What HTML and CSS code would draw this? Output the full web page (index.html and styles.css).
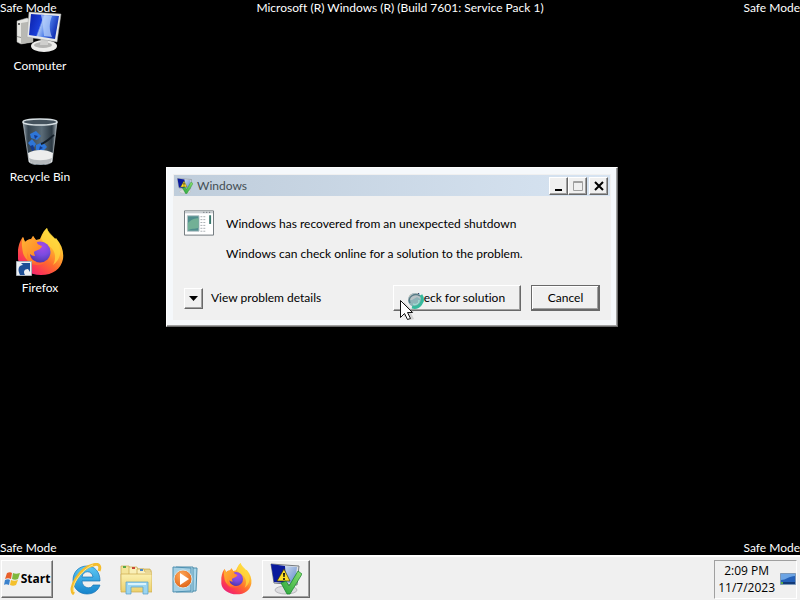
FILE: index.html
```html
<!DOCTYPE html>
<html lang="en">
<head>
<meta charset="utf-8">
<title>Safe Mode desktop</title>
<link rel="stylesheet" href="styles.css">
</head>
<body>
<svg class="defs" aria-hidden="true">
  <defs>
    <linearGradient id="foxBody" x1="0.85" y1="0.05" x2="0.2" y2="0.95">
      <stop offset="0" stop-color="#fff44f"/><stop offset="0.3" stop-color="#ffb82e"/>
      <stop offset="0.6" stop-color="#ff6a2e"/><stop offset="0.85" stop-color="#fb3556"/><stop offset="1" stop-color="#e8257a"/>
    </linearGradient>
    <radialGradient id="foxGlobe" cx="0.6" cy="0.25" r="0.8">
      <stop offset="0" stop-color="#a64be8"/><stop offset="0.5" stop-color="#7a4be0"/><stop offset="1" stop-color="#4a34a8"/>
    </radialGradient>
    <linearGradient id="foxHead" x1="0" y1="0" x2="1" y2="1">
      <stop offset="0" stop-color="#ffb536"/><stop offset="1" stop-color="#ff7a22"/>
    </linearGradient>
    <linearGradient id="screen" x1="0" y1="0" x2="1" y2="0.3">
      <stop offset="0" stop-color="#0a1fa8"/><stop offset="0.45" stop-color="#1a3fd8"/>
      <stop offset="0.5" stop-color="#9fbdf5"/><stop offset="0.7" stop-color="#4a7ae8"/><stop offset="1" stop-color="#1636b8"/>
    </linearGradient>
    <linearGradient id="paleScreen" x1="0" y1="0" x2="1" y2="1">
      <stop offset="0" stop-color="#cfdcf0"/><stop offset="1" stop-color="#5f88cc"/>
    </linearGradient>
    <linearGradient id="glass" x1="0" y1="0" x2="1" y2="0">
      <stop offset="0" stop-color="#8d9aa3"/><stop offset="0.15" stop-color="#34434f"/>
      <stop offset="0.55" stop-color="#5b6c78"/><stop offset="0.85" stop-color="#2c3943"/><stop offset="1" stop-color="#a4afb6"/>
    </linearGradient>
    <linearGradient id="ieBlue" x1="0" y1="0" x2="0" y2="1">
      <stop offset="0" stop-color="#5cc8f4"/><stop offset="1" stop-color="#1684cc"/>
    </linearGradient>
    <linearGradient id="folder" x1="0" y1="0" x2="0" y2="1">
      <stop offset="0" stop-color="#fbf0b0"/><stop offset="1" stop-color="#ecd06c"/>
    </linearGradient>
    <radialGradient id="orange" cx="0.4" cy="0.3" r="0.8">
      <stop offset="0" stop-color="#ffa95a"/><stop offset="1" stop-color="#dc5c10"/>
    </radialGradient>
    <linearGradient id="tick" x1="1" y1="0" x2="0" y2="1">
      <stop offset="0" stop-color="#8be070"/><stop offset="1" stop-color="#28a43c"/>
    </linearGradient>
    <symbol id="firefox" viewBox="0 0 48 48">
      <path fill="url(#foxBody)" d="M2 22C3 15 5 11 7 9l2 5c2-2 4-3 6-3l2-3 3 4 4-1C26 7 27 3 31 0c1 5 4 7 8 11l1-1c6 7 8 14 7 21-2 10-10 16-22 16S3 40 2 31z"/>
      <path fill="#ffd83d" d="M31 0c1 6 12 10 13 22 1 7-3 12-7 15 4-8 2-15-4-19-6-3-8-8-8-8 2-3 3-7 6-10z" opacity=".75"/>
      <circle cx="24" cy="24" r="10.500" fill="url(#foxGlobe)"/>
      <path fill="url(#foxHead)" d="M7 9l2 5c2-2 5-3 7-2l1-4 4 6c0 3 3 3 5 4-1 4-6 4-8 6 0 2 1 3 1 4-2 0-4-1-5-2 0 4 2 7 7 8-6 2-12-2-14-9C6 19 5 14 7 9z"/>
      <path fill="#ff7a2a" d="M11 24c2 8 9 13 18 10-3 4-14 4-18-1z" opacity=".6"/>
    </symbol>
    <symbol id="recover" viewBox="0 0 32 32">
      <ellipse cx="16" cy="27" rx="11" ry="4" fill="#dddde0" stroke="#b8b8bc"/>
      <path fill="#dfe2e4" stroke="#777b80" d="M1 1l28 2-2 19L4 20z"/>
      <path fill="url(#paleScreen)" d="M14 3l13 1-2 17-11-2z"/>
      <path fill="#0a1a9c" d="M1 1l14 2 1 17-12-1z"/>
      <path fill="#ffe02a" stroke="#39340a" stroke-width=".7" d="M14 6L7 18h13z"/>
      <path fill="#111" d="M13 10h2l-.4 4h-1.200zM13.200 15h1.600v2h-1.600z"/>
      <path fill="url(#tick)" stroke="#13812a" stroke-width=".7" d="M11 20l5-2 3 5 9-15 4 3-12 20h-3z"/>
    </symbol>
  </defs>
</svg>

<main class="desktop">
  <span class="mark mark-tl">Safe Mode</span>
  <span class="mark mark-tc">Microsoft (R) Windows (R) (Build 7601: Service Pack 1)</span>
  <span class="mark mark-tr">Safe Mode</span>
  <span class="mark mark-bl">Safe Mode</span>
  <span class="mark mark-br">Safe Mode</span>

  <nav class="shortcuts" aria-label="Desktop">
    <a class="shortcut" href="#computer">
      <svg viewBox="0 0 48 48" aria-hidden="true">
        <path fill="#e6e6e2" stroke="#aaa" stroke-width=".5" d="M1 15l10-3 6 3v21L5 38l-4-2z"/>
        <path fill="#b9b9b4" d="M5 17l12-2v21L5 38z"/>
        <circle cx="3" cy="18" r="1" fill="#333"/>
        <path fill="#8c8c88" d="M1 30l4 1v1l-4-1z"/>
        <ellipse cx="28" cy="40" rx="13" ry="6" fill="#ededeb"/>
        <ellipse cx="27" cy="39" rx="9" ry="3" fill="#b4b4b2"/>
        <path fill="#cfcfcd" d="M25 31h7v8h-8z"/>
        <path fill="#e8e9e8" stroke="#a0a2a3" stroke-width=".5" d="M13 6l32 2-4 28-30-5z"/>
        <path fill="url(#screen)" d="M15 8l28 2-4 23-26-4z"/>
        <path fill="#b7d0fb" opacity=".75" d="M25 9l11 1c-3 7-3 14 0 21l-8-1c-1-7-1-14-3-21z"/>
      </svg>
      <span>Computer</span>
    </a>
    <a class="shortcut" href="#recycle-bin">
      <svg viewBox="0 0 48 48" aria-hidden="true">
        <path fill="url(#glass)" stroke="#b8c2c8" stroke-width=".7" d="M7 5h34l-5 40c-5 4-19 4-23 0z"/>
        <path fill="#2e76d8" d="M14 17l6-3 5 5-4 4-6-2zM12 26l4-4 4 5-3 5zM20 28l7-3 4 5-5 5-6-2z"/>
        <path fill="#14398c" d="M18 18l4 1-3 3zM14 29l3-1 2 5-3 1zM24 29l3 2-4 2z"/>
        <path fill="none" stroke="#151f29" stroke-width="2" d="M25 27c6-2 9-6 13-9"/>
        <path fill="#eceded" d="M12 36c7-4 18-4 25 0l-1 9c-5 3-18 3-23 0z"/>
        <path fill="#b4b8bb" d="M13 41c6 3 16 3 23 0l-1 4c-5 3-16 3-21 0z"/>
        <ellipse cx="24" cy="5" rx="17" ry="3" fill="#44525d" stroke="#d8e0e4" stroke-width="1.500"/>
      </svg>
      <span>Recycle Bin</span>
    </a>
    <a class="shortcut" href="#firefox">
      <svg viewBox="0 0 48 48" aria-hidden="true">
        <use href="#firefox"/>
        <path fill="#eef1f4" stroke="#a9b0b8" d="M.5 33.500h15v14H.5z"/>
        <path fill="#1e4f96" d="M4 47c-3-6-1-10 3-10l-2-2h9v9l-2-3c-4 0-5 3-3 6z"/>
      </svg>
      <span>Firefox</span>
    </a>
  </nav>

  <section class="dialog" role="dialog" aria-labelledby="dialog-title">
    <header class="titlebar">
      <svg class="title-icon" aria-hidden="true"><use href="#recover"/></svg>
      <h1 id="dialog-title">Windows</h1>
      <div class="window-buttons">
        <button class="raised" aria-label="Minimize"><svg viewBox="0 0 12 12"><path fill="#000" d="M2 9h7v2H2z"/></svg></button>
        <button class="raised" aria-label="Maximize" disabled><svg viewBox="0 0 12 12"><path fill="none" stroke="#a0a0a0" d="M1.500 1.500h9v9h-9zM1 2.500h10"/></svg></button>
        <button class="raised close" aria-label="Close"><svg viewBox="0 0 12 12"><path fill="none" stroke="#000" stroke-width="2" d="M2 2l8 8M10 2l-8 8"/></svg></button>
      </div>
    </header>
    <div class="message">
      <svg class="app-icon" viewBox="0 0 31 26" aria-hidden="true">
        <path fill="#fff" stroke="#6f777b" d="M.5.500h30v25H.5z"/>
        <path fill="#c9ced2" d="M1 1h29v2H1z"/>
        <path stroke="#596066" stroke-dasharray="1 2" d="M20 2h9"/>
        <path fill="#4f8d8d" stroke="#b6c4c8" d="M3.500 5.500h12v16h-12z"/>
        <path fill="#72b096" d="M4 13c4-4 7-5 11-5v10c-4 2-8 0-11 3z"/>
        <path stroke="#a9aeb2" stroke-dasharray="2 1" d="M17 6.500h6M17 9.500h6M17 12.500h6M17 15.500h6M17 18.500h6M17 21.500h6"/>
        <path fill="#39786e" d="M26 5h2v9h-2z"/>
      </svg>
      <div>
        <p>Windows has recovered from an unexpected shutdown</p>
        <p>Windows can check online for a solution to the problem.</p>
      </div>
    </div>
    <footer class="actions">
      <button class="raised expand" id="details" aria-label="View problem details"><svg viewBox="0 0 9 5"><path d="M0 0h9L4.500 5z"/></svg></button>
      <label for="details">View problem details</label>
      <div class="commands">
        <button class="raised check">Check for solution</button>
        <button class="raised cancel">Cancel</button>
      </div>
    </footer>
  </section>

  <svg class="pointer" viewBox="0 0 32 32" aria-hidden="true">
    <circle cx="15" cy="12" r="7" fill="#8fb4b8"/>
    <path fill="#b9c2c6" d="M8 12a7 7 0 0 1 14 0l-5-3-5 3z"/>
    <path fill="none" stroke="#35b99c" stroke-width="3" d="M21 7a8 8 0 0 1-9 12"/>
    <path fill="none" stroke="#587c86" stroke-width="1.500" d="M10 15c-3-6 5-11 10-7"/>
    <path fill="none" stroke="#a4efdc" d="M19 12c0 4-3 5-6 4"/>
    <path fill="#999" opacity=".35" d="M4 14l10 10-3 1 3 6-4 1-3-6-3 3z"/>
    <path fill="#fff" stroke="#111" d="M.5 12.500v17l4-4 3 6 3-1-3-6h5z"/>
  </svg>
</main>

<footer class="taskbar">
  <button class="raised start">
    <svg viewBox="0 0 16 16" aria-hidden="true">
      <path fill="#e8602c" d="M3 2c2-1 4-1 5 0L7 8C5 7 3 7 1 8z"/>
      <path fill="#7fb83c" d="M9 2c2 1 4 1 7 0l-2 6c-2 1-4 1-6 0z"/>
      <path fill="#3c82cc" d="M1 9c2-1 4-1 5 0l-1 5c-2-1-4-1-5 0z"/>
      <path fill="#f4c02c" d="M7 9c2 1 4 1 7 0l-2 5c-2 1-4 1-6 0z"/>
    </svg>
    Start
  </button>
  <nav class="pinned" aria-label="Taskbar">
    <button aria-label="Internet Explorer">
      <svg viewBox="0 0 32 32" aria-hidden="true">
        <path fill="url(#ieBlue)" stroke="#1672b4" stroke-width=".7" fill-rule="evenodd" d="M17 3C25 3 30 9 30 18H12c0 7 9 9 11 4h7c-2 6-7 9-13 9C9 31 3 25 3 17S9 3 17 3zM12 14h11c-1-7-10-7-11 0z"/>
        <path fill="none" stroke="#f5bd2c" stroke-width="3" d="M4 31C-3 26 10 5 23 2c6-2 8 1 6 6"/>
        <path fill="none" stroke="#ffe88a" d="M4 29C0 23 12 6 23 2"/>
      </svg>
    </button>
    <button aria-label="Windows Explorer">
      <svg viewBox="0 0 32 32" aria-hidden="true">
        <path fill="#f4e49a" stroke="#c8aa4c" stroke-width=".7" d="M1 3h8l1 3h20v21H1z"/>
        <path fill="#f9efb8" stroke="#c8aa4c" stroke-width=".7" d="M9 4h8l1 3h13v20H9z"/>
        <path fill="#faf0be" stroke="#c8aa4c" stroke-width=".7" d="M17 6h7l1 3h7v19H17z"/>
        <path fill="#58a848" d="M3 3h3v2H3z"/><path fill="#c84838" d="M12 4h3v2h-3z"/><path fill="#4c88c8" d="M20 6h3v2h-3z"/>
        <path fill="url(#folder)" stroke="#cba94b" stroke-width=".7" d="M1 11h31v18H1z"/>
        <path fill="#9bd5f0" stroke="#549fc8" stroke-width=".7" d="M6 19h22v12h-5v-7H11v7H6z"/>
        <path fill="#d9f3fd" d="M8 20h18v2H8z"/>
      </svg>
    </button>
    <button aria-label="Windows Media Player">
      <svg viewBox="0 0 32 32" aria-hidden="true">
        <path fill="#a8d6ea" stroke="#4e8eac" d="M9 5h18l-1 23H9z"/>
        <path fill="#bee3f2" stroke="#4e8eac" d="M6 4h17v25H6z"/>
        <path fill="#a5d0e4" stroke="#4f91b2" d="M3 4l18 1v23l-18 1z"/>
        <circle cx="13" cy="16" r="9" fill="url(#orange)" stroke="#d4e5e8"/>
        <path fill="#fff" d="M10 10l9 6-9 6z"/>
      </svg>
    </button>
    <button aria-label="Firefox"><svg aria-hidden="true"><use href="#firefox"/></svg></button>
    <button class="raised" aria-label="Windows problem reporting"><svg aria-hidden="true"><use href="#recover"/></svg></button>
  </nav>
  <div class="tray">
    <time datetime="2023-11-07T14:09">2:09 PM<br>11/7/2023</time>
    <button aria-label="Show desktop">
      <svg viewBox="0 0 16 14" aria-hidden="true">
        <path fill="#2460b8" stroke="#7d98b8" d="M.5 1.500h15v11H.5z"/>
        <path fill="#6ca4e4" d="M1 2h14v2C9 4 6 8 1 8z"/>
        <path fill="#123a78" d="M1 10h14v2H1z"/><path fill="#58a848" d="M1 10h2v2H1z"/>
      </svg>
    </button>
  </div>
</footer>
</body>
</html>
```
FILE: styles.css
```css
* {
  box-sizing: border-box;
}

body {
  margin: 0;
  min-height: 100vh;
  display: flex;
  flex-direction: column;
  background: #000;
  color: #000;
  font: 12px/16px Lato, "Open Sans", sans-serif;
  font-variant-ligatures: none;
}

button {
  display: flex;
  align-items: center;
  justify-content: center;
  padding: 0;
  border: 0;
  background: none;
  color: inherit;
  font: inherit;
}

svg {
  display: block;
}

.defs {
  position: absolute;
  width: 0;
  height: 0;
}

.raised {
  background: #f0f0f0;
  border: 1px solid;
  border-color: #fff #696969 #696969 #fff;
  box-shadow: inset -1px -1px #a0a0a0;
}

/* Desktop */

.desktop {
  position: relative;
  flex: 1;
  overflow: hidden;
  color: #fff;
}

.mark {
  position: absolute;
  z-index: 1;
  line-height: 15px;
  white-space: nowrap;
}

.mark-tl { top: 0; left: 0; }
.mark-tc { top: 0; left: 0; right: 0; text-align: center; }
.mark-tr { top: 0; right: 0; }
.mark-bl { bottom: 0; left: 0; }
.mark-br { bottom: 0; right: 0; }

.shortcuts {
  display: flex;
  flex-direction: column;
  gap: 43px;
  width: 80px;
  padding-top: 6px;
}

.shortcut {
  display: flex;
  flex-direction: column;
  align-items: center;
  gap: 4px;
  color: #fff;
  text-decoration: none;
}

.shortcut svg {
  width: 48px;
  height: 48px;
}

/* Dialog window */

.dialog {
  position: absolute;
  top: 167px;
  left: 166px;
  width: 452px;
  padding: 7px;
  background: #f0f0f0;
  border: 1px solid;
  border-color: #fff #696969 #696969 #fff;
  box-shadow: inset -1px -1px #a0a0a0, inset 0 0 0 6px #f5f8fb;
  color: #000;
}

.titlebar {
  display: flex;
  align-items: center;
  gap: 4px;
  height: 21px;
  padding: 0 2px 0 3px;
  background: linear-gradient(90deg, #bfcddb, #d7e4f2);
  color: #434e54;
}

.title-icon {
  width: 16px;
  height: 16px;
}

.titlebar h1 {
  flex: 1;
  margin: 0;
  font: inherit;
}

.window-buttons {
  display: flex;
}

.window-buttons button {
  width: 19px;
  height: 18px;
}

.window-buttons svg {
  width: 12px;
  height: 12px;
}

.window-buttons .close {
  margin-left: 2px;
}

.message {
  display: flex;
  gap: 12px;
  padding: 14px 10px 0;
}

.app-icon {
  width: 30px;
  height: 26px;
}

.message p {
  margin: 6px 0 14px;
}

.actions {
  display: flex;
  align-items: center;
  gap: 8px;
  padding: 9px 10px 8px;
}

.actions label {
  flex: 1;
}

.expand {
  width: 19px;
  height: 21px;
}

.expand svg {
  width: 9px;
  height: 5px;
}

.commands {
  display: flex;
  gap: 10px;
}

.commands button {
  height: 26px;
}

.commands .check {
  width: 128px;
}

.commands .cancel {
  width: 69px;
  border-color: #696969;
  box-shadow: inset -1px -1px #696969, inset 1px 1px #fff, inset -2px -2px #a0a0a0;
}

.pointer {
  position: absolute;
  top: 288px;
  left: 400px;
  width: 32px;
  height: 32px;
}

/* Taskbar */

.taskbar {
  display: flex;
  align-items: center;
  height: 45px;
  padding: 2px 3px 1px 1px;
  background: #f0f0f0;
  border-top: 2px solid #fff;
  font-family: "Open Sans", "Noto Sans", sans-serif;
}

.start {
  width: 52px;
  height: 38px;
  gap: 1px;
  font-weight: 700;
}

.start svg {
  width: 16px;
  height: 16px;
}

.pinned {
  display: flex;
  flex: 1;
  gap: 2px;
  padding-left: 9px;
}

.pinned button {
  width: 48px;
  height: 38px;
}

.pinned svg {
  width: 32px;
  height: 32px;
}

.tray {
  display: flex;
  align-items: center;
  gap: 5px;
  height: 39px;
  padding-left: 3px;
  border: 1px solid;
  border-color: #a0a0a0 #fff #fff #a0a0a0;
  text-align: center;
}

.tray time {
  line-height: 17px;
}

.tray svg {
  width: 16px;
  height: 14px;
}
```
